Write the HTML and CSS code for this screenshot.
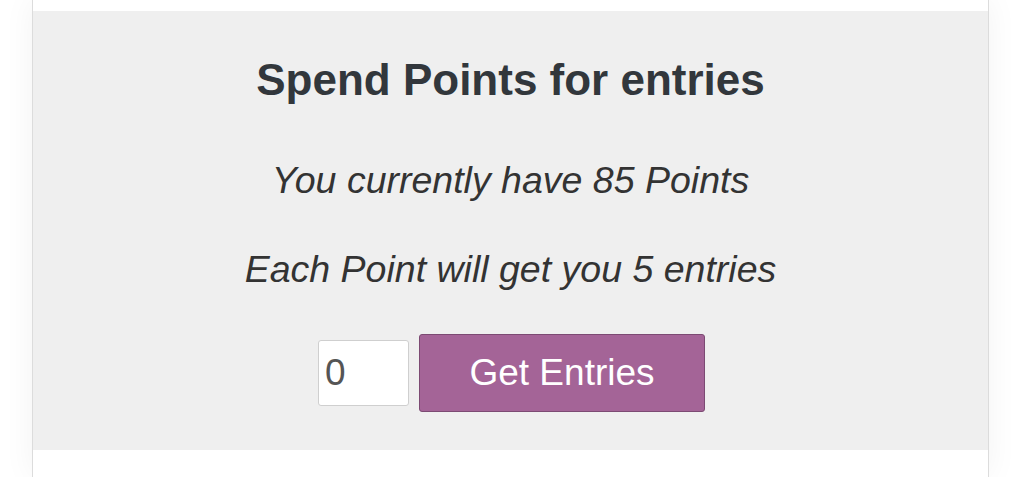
FILE: index.html
```html
<!DOCTYPE html>
<html lang="en">
<head>
  <meta charset="UTF-8">
  <meta name="viewport" content="width=device-width, initial-scale=1.0">
  <title>Spend Points</title>
  <link rel="stylesheet" href="styles.css">
</head>
<body>
  <div class="card">
    <div class="spend-box">
      <h2>Spend Points for entries</h2>
      <p class="balance">You currently have 85 Points</p>
      <p class="rate">Each Point will get you 5 entries</p>
      <form class="spend-form">
        <input type="text" class="points-input" value="0">
        <button type="button" class="get-btn">Get Entries</button>
      </form>
    </div>
  </div>
</body>
</html>
```

FILE: styles.css
```css
body {
  margin: 0;
  padding: 0;
  background-color: #fff;
  font-family: 'Liberation Sans', Arial, sans-serif;
  color: #32373c;
}

.card {
  margin-left: 32px;
  width: 957px;
  height: 477px;
  box-sizing: border-box;
  border-left: 1px solid #dcdcdc;
  border-right: 1px solid #dcdcdc;
  background-color: #fff;
  box-shadow: 0 0 30px rgba(0, 0, 0, 0.05);
  padding-top: 11px;
}

.spend-box {
  background-color: #efefef;
  text-align: center;
  padding: 43px 0 38px;
}

.spend-box h2 {
  margin: 0;
  font-size: 44px;
  line-height: 52px;
  font-weight: bold;
  color: #32373c;
}

.spend-box p {
  margin: 0;
  font-size: 37.5px;
  line-height: 44px;
  font-style: italic;
  color: #333;
}

.balance {
  margin-top: 52px !important;
}

.rate {
  margin-top: 45px !important;
}

.spend-form {
  display: flex;
  justify-content: center;
  align-items: center;
  gap: 10px;
  margin: 43px 0 0;
  padding-left: 2px;
}

.points-input {
  width: 91px;
  height: 66px;
  box-sizing: border-box;
  padding: 0 6px;
  border: 1px solid #cfcfcf;
  border-radius: 3px;
  background-color: #fff;
  font-family: inherit;
  font-size: 37px;
  color: #555;
}

.get-btn {
  width: 286px;
  height: 78px;
  box-sizing: border-box;
  border: 1px solid #7c4a73;
  border-radius: 3px;
  background-color: #a46497;
  color: #fff;
  font-family: inherit;
  font-size: 37px;
  cursor: pointer;
}
```
